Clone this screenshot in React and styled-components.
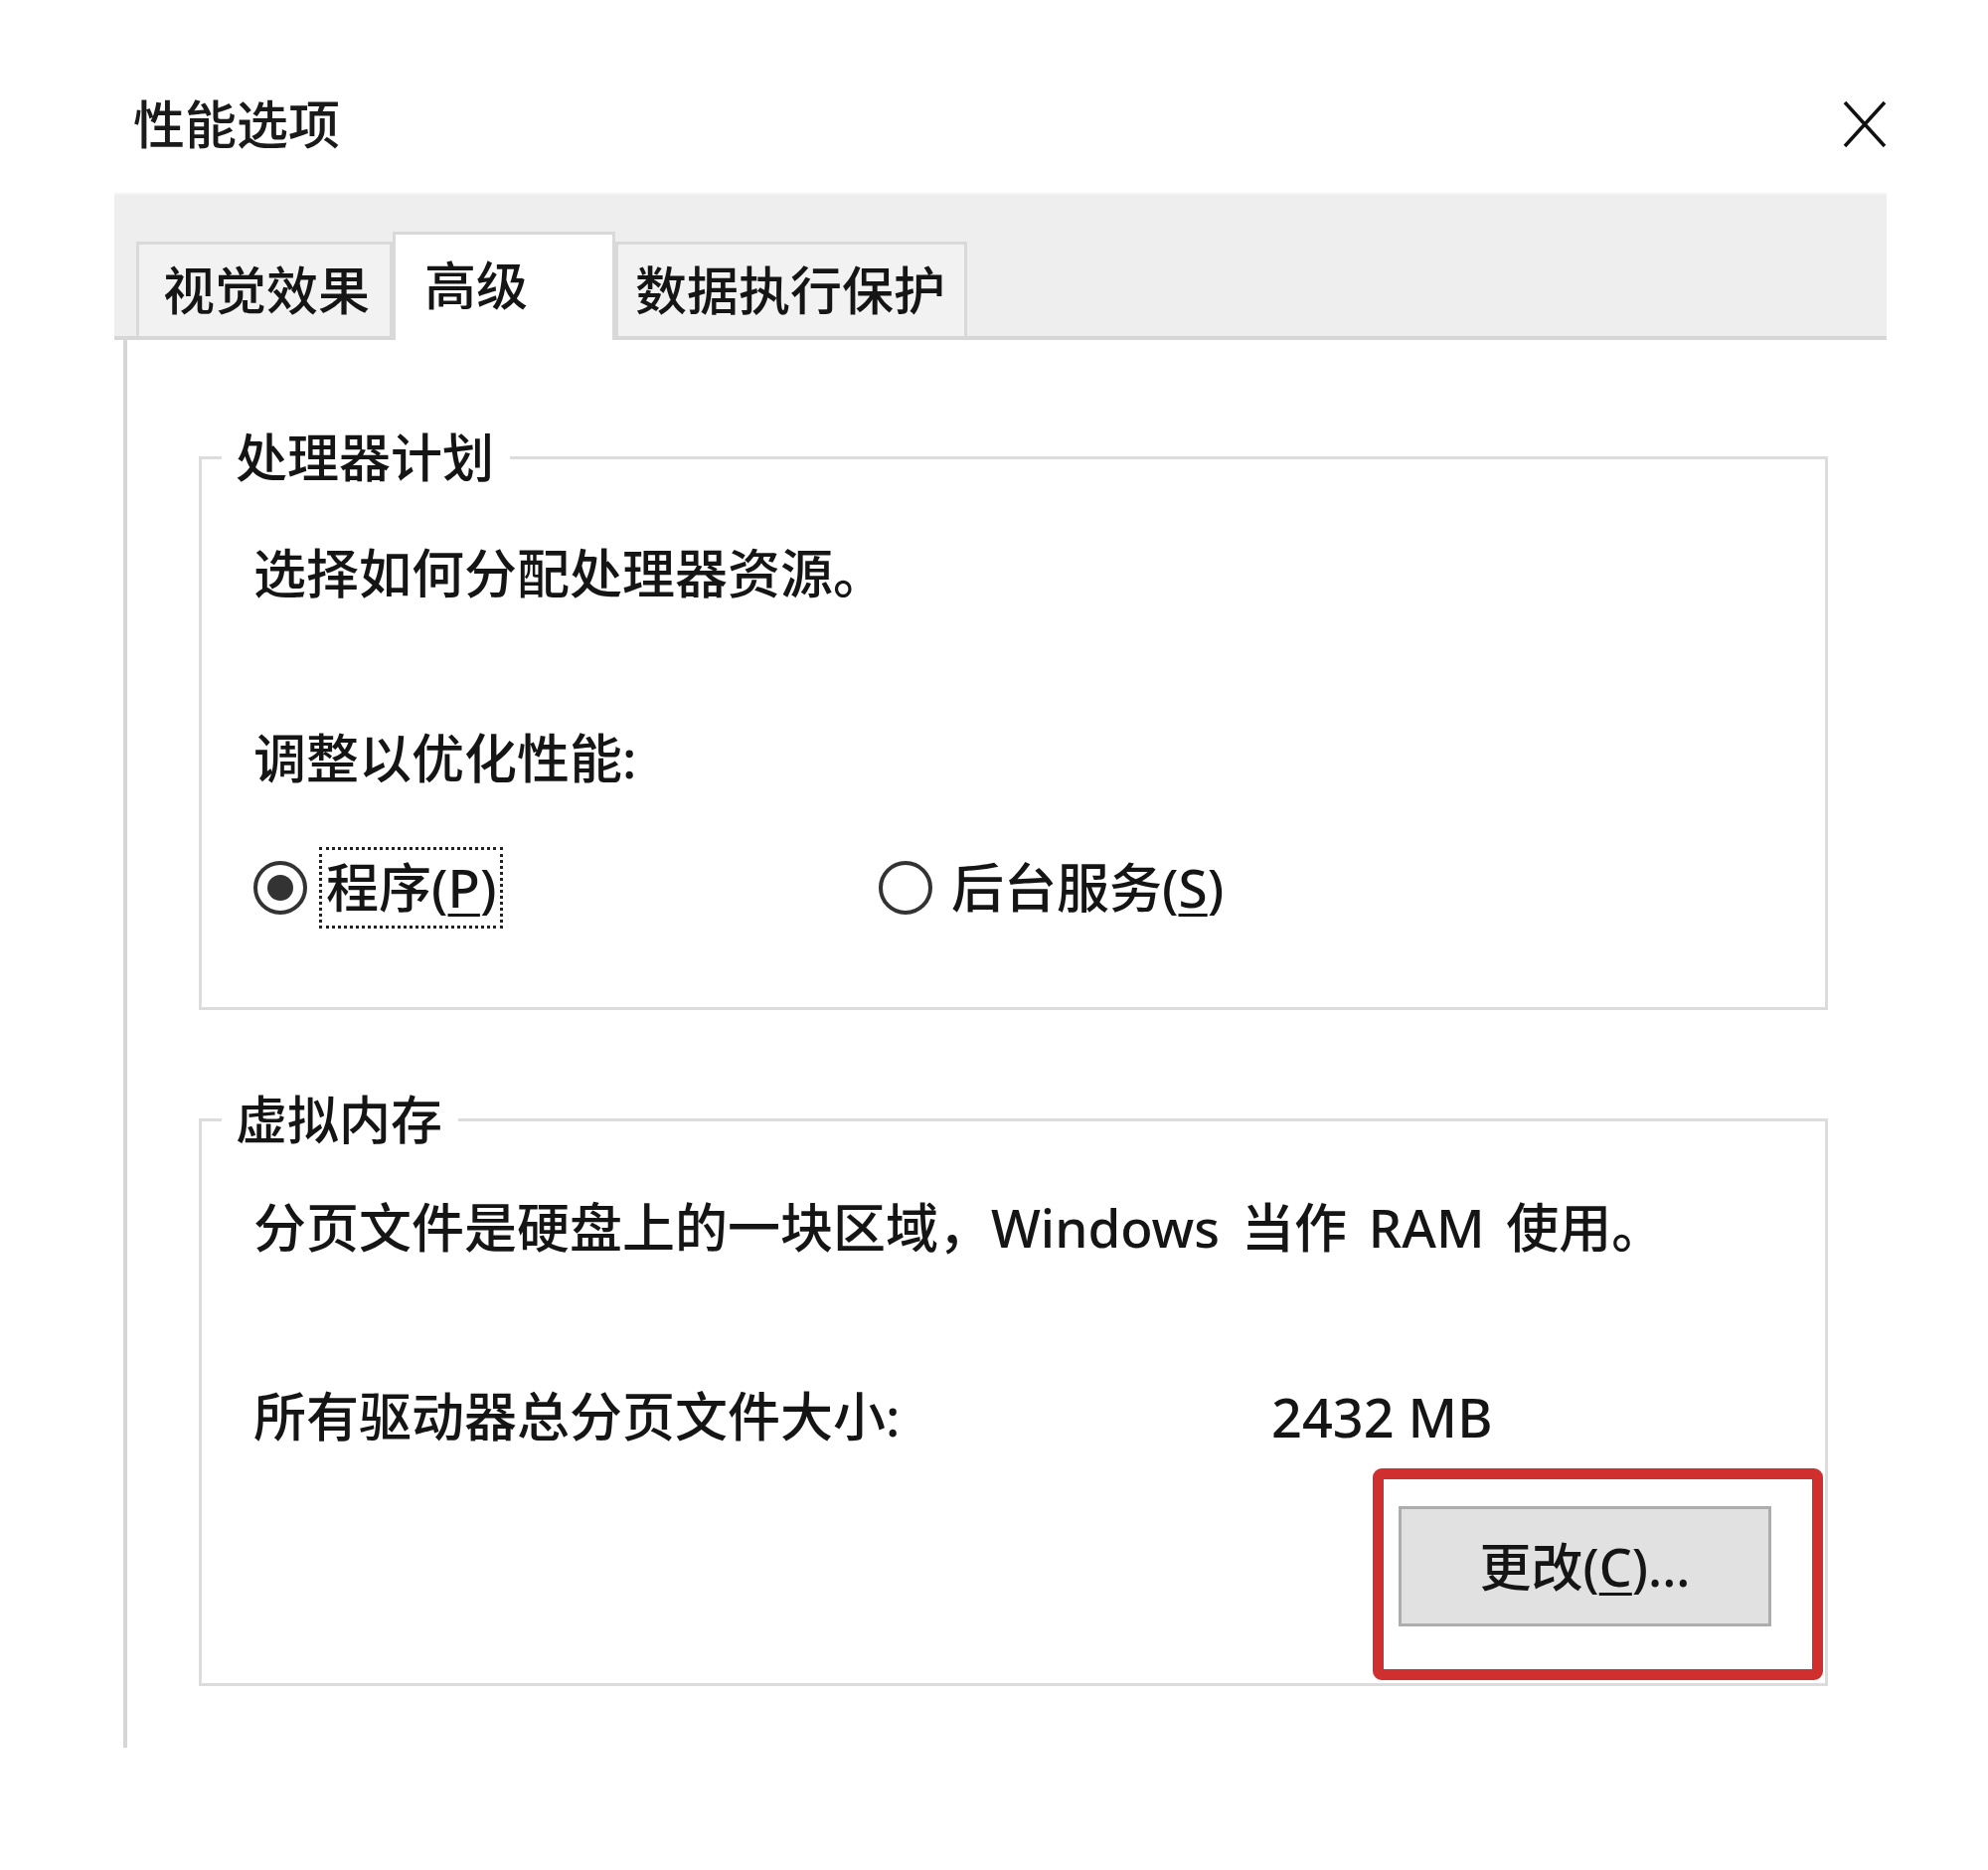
import React from "react";
import styled, { createGlobalStyle } from "styled-components";

const GlobalStyle = createGlobalStyle`
  html, body { margin: 0; padding: 0; background: #ffffff; }
  body {
    font-family: "Noto Sans", "Noto Sans CJK SC", sans-serif;
    color: #141414;
  }
`;

const Page = styled.div`
  width: 2000px;
  min-height: 1881px;
  padding-top: 95px;
  box-sizing: border-box;
  background: #ffffff;
`;

const Dialog = styled.div`
  margin-left: 115px;
  width: 1783px;
  display: flex;
  flex-direction: column;
`;

const TitleBar = styled.div`
  height: 60px;
  display: flex;
  align-items: center;
  justify-content: space-between;
  padding-left: 19px;
`;

const Title = styled.div`
  font-size: 52px;
  font-weight: 500;
  line-height: 60px;
  color: #1a1a1a;
`;

const CloseButton = styled.button`
  width: 44px;
  height: 48px;
  padding: 0;
  border: none;
  background: transparent;
  display: flex;
  align-items: center;
  justify-content: center;
  cursor: pointer;
`;

const TabStrip = styled.div`
  margin-top: 39px;
  height: 148px;
  box-sizing: border-box;
  background: #eeeeee;
  border-top: 2px solid #f4f4f4;
  border-bottom: 4px solid #d7d7d7;
  display: flex;
  align-items: flex-end;
  padding-left: 22px;
`;

const Tab = styled.div`
  box-sizing: border-box;
  width: ${(p) => p.$width}px;
  height: ${(p) => (p.$active ? 109 : 95)}px;
  margin-bottom: ${(p) => (p.$active ? -4 : 0)}px;
  padding-left: ${(p) => p.$pad}px;
  padding-bottom: ${(p) => (p.$active ? 4 : 0)}px;
  background: ${(p) => (p.$active ? "#ffffff" : "#f2f2f2")};
  border: 3px solid #d9d9d9;
  border-bottom: none;
  display: flex;
  align-items: center;
  font-size: 52px;
  font-weight: 500;
  line-height: 60px;
  color: #151515;
  white-space: nowrap;
`;

const Panel = styled.div`
  margin-left: 9px;
  border-left: 4px solid #d6d6d6;
  background: #ffffff;
  padding: 88px 59px 62px 72px;
  display: flex;
  flex-direction: column;
`;

const GroupBox = styled.fieldset`
  margin: ${(p) => p.$top}px 0 0 0;
  padding: 0;
  border: 3px solid #dcdcdc;
  min-inline-size: 0;
`;

const Legend = styled.legend`
  margin-left: 20px;
  padding: 0 16px 0 14px;
  font-size: 52px;
  font-weight: 500;
  line-height: 60px;
  color: #151515;
`;

const GroupBody = styled.div`
  padding: ${(p) => p.$pad};
  display: flex;
  flex-direction: column;
`;

const Line = styled.div`
  margin-top: ${(p) => p.$top}px;
  font-size: 53px;
  font-weight: 500;
  line-height: 60px;
  color: #151515;
  white-space: nowrap;
  word-spacing: ${(p) => p.$wordSpacing || 0}px;
`;

const InfoRow = styled.div`
  margin-top: ${(p) => p.$top}px;
  display: grid;
  grid-template-columns: 1024px auto;
  font-size: 53px;
  font-weight: 500;
  line-height: 60px;
  color: #151515;
  white-space: nowrap;
`;

const Value = styled.span`
  font-size: 54px;
`;

const RadioRow = styled.div`
  margin-top: ${(p) => p.$top}px;
  display: grid;
  grid-template-columns: 629px auto;
  align-items: center;
`;

const RadioItem = styled.label`
  display: flex;
  align-items: center;
  gap: 12px;
  cursor: pointer;
`;

const RadioCircle = styled.span`
  width: 54px;
  height: 54px;
  box-sizing: border-box;
  border-radius: 50%;
  border: 4px solid #333333;
  background: #ffffff;
  display: flex;
  align-items: center;
  justify-content: center;
  flex: none;

  &::after {
    content: "";
    width: 26px;
    height: 26px;
    border-radius: 50%;
    background: #333333;
    display: ${(p) => (p.$checked ? "block" : "none")};
  }
`;

const RadioLabel = styled.span`
  padding: 8px 4px;
  border: 3px ${(p) => (p.$focused ? "dotted #222222" : "solid transparent")};
  font-size: 53px;
  font-weight: 500;
  line-height: 60px;
  color: #151515;
  white-space: nowrap;
`;

const AccessKey = styled.span`
  text-decoration: underline;
  text-decoration-thickness: 3px;
  text-underline-offset: 6px;
`;

const ButtonRow = styled.div`
  margin-top: 22px;
  display: flex;
  justify-content: flex-end;
`;

const Highlight = styled.div`
  border: 11px solid #d02f2f;
  border-radius: 9px;
  padding: 27px 41px 43px 15px;
`;

const PushButton = styled.button`
  width: 375px;
  height: 121px;
  box-sizing: border-box;
  background: #e1e1e1;
  border: 3px solid #adadad;
  font-family: "Noto Sans", "Noto Sans CJK SC", sans-serif;
  font-size: 52px;
  font-weight: 500;
  line-height: 60px;
  color: #151515;
  display: flex;
  align-items: center;
  justify-content: center;
  padding: 0;
  cursor: pointer;
`;

function CloseIcon() {
  return (
    <svg width="44" height="48" viewBox="0 0 44 48" fill="none">
      <path d="M2 2 L42 46 M42 2 L2 46" stroke="#111111" strokeWidth="3.5" strokeLinecap="butt" />
    </svg>
  );
}

export default function App() {
  return (
    <>
      <GlobalStyle />
      <Page>
        <Dialog>
          <TitleBar>
            <Title>性能选项</Title>
            <CloseButton aria-label="关闭">
              <CloseIcon />
            </CloseButton>
          </TitleBar>

          <TabStrip>
            <Tab $width={258} $pad={24}>视觉效果</Tab>
            <Tab $width={224} $pad={29} $active>高级</Tab>
            <Tab $width={354} $pad={17}>数据执行保护</Tab>
          </TabStrip>

          <Panel>
            <GroupBox $top={0}>
              <Legend>处理器计划</Legend>
              <GroupBody $pad="0 0 79px 52px">
                <Line $top={57}>选择如何分配处理器资源。</Line>
                <Line $top={126}>调整以优化性能:</Line>
                <RadioRow $top={59}>
                  <RadioItem>
                    <RadioCircle $checked />
                    <RadioLabel $focused>
                      程序(<AccessKey>P</AccessKey>)
                    </RadioLabel>
                  </RadioItem>
                  <RadioItem>
                    <RadioCircle />
                    <RadioLabel>
                      后台服务(<AccessKey>S</AccessKey>)
                    </RadioLabel>
                  </RadioItem>
                </RadioRow>
              </GroupBody>
            </GroupBox>

            <GroupBox $top={80}>
              <Legend>虚拟内存</Legend>
              <GroupBody $pad="0 2px 3px 52px">
                <Line $top={49} $wordSpacing={8}>
                  分页文件是硬盘上的一块区域，Windows 当作 RAM 使用。
                </Line>
                <InfoRow $top={130}>
                  <span>所有驱动器总分页文件大小:</span>
                  <Value>2432 MB</Value>
                </InfoRow>
                <ButtonRow>
                  <Highlight>
                    <PushButton>
                      更改(<AccessKey>C</AccessKey>)...
                    </PushButton>
                  </Highlight>
                </ButtonRow>
              </GroupBody>
            </GroupBox>
          </Panel>
        </Dialog>
      </Page>
    </>
  );
}
